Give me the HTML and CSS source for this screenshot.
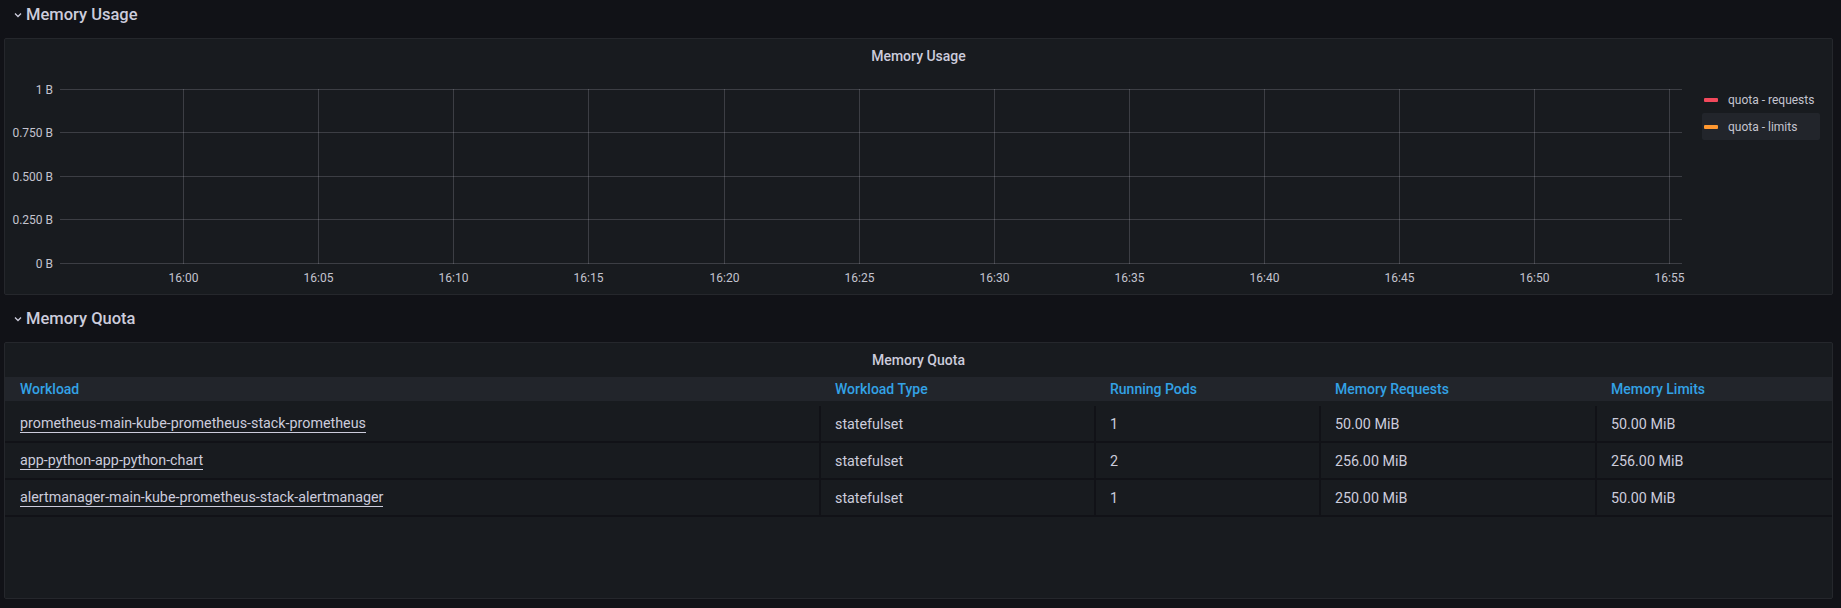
FILE: index.html
```html
<!DOCTYPE html>
<html lang="en">
<head>
<meta charset="utf-8">
<title>Memory</title>
<link rel="stylesheet" href="styles.css">
</head>
<body>
<section class="row">
  <header class="row-head">
    <svg class="chev" width="8" height="6" viewBox="0 0 8 6"><polyline points="1,1.5 4,4.5 7,1.5" fill="none" stroke="#ccccdc" stroke-width="1.3"/></svg>
    <span class="row-title">Memory Usage</span>
  </header>
  <div class="panel">
    <div class="panel-title">Memory Usage</div>
    <div class="chart-body">
      <svg class="chart" width="1695" height="222" viewBox="0 0 1695 222">
        <g class="grid" stroke="rgba(204,204,220,0.2)" stroke-width="1">
          <line x1="55" y1="16.5" x2="1677" y2="16.5"/>
          <line x1="55" y1="59.5" x2="1677" y2="59.5"/>
          <line x1="55" y1="103.5" x2="1677" y2="103.5"/>
          <line x1="55" y1="146.5" x2="1677" y2="146.5"/>
          <line x1="55" y1="190.5" x2="1677" y2="190.5"/>
          <line x1="178.5" y1="16" x2="178.5" y2="191"/>
          <line x1="313.5" y1="16" x2="313.5" y2="191"/>
          <line x1="448.5" y1="16" x2="448.5" y2="191"/>
          <line x1="583.5" y1="16" x2="583.5" y2="191"/>
          <line x1="719.5" y1="16" x2="719.5" y2="191"/>
          <line x1="854.5" y1="16" x2="854.5" y2="191"/>
          <line x1="989.5" y1="16" x2="989.5" y2="191"/>
          <line x1="1124.5" y1="16" x2="1124.5" y2="191"/>
          <line x1="1259.5" y1="16" x2="1259.5" y2="191"/>
          <line x1="1394.5" y1="16" x2="1394.5" y2="191"/>
          <line x1="1529.5" y1="16" x2="1529.5" y2="191"/>
          <line x1="1664.5" y1="16" x2="1664.5" y2="191"/>
        </g>
        <g class="axis-y" text-anchor="end">
          <text x="48" y="20.5">1 B</text>
          <text x="48" y="63.5">0.750 B</text>
          <text x="48" y="107.5">0.500 B</text>
          <text x="48" y="150.5">0.250 B</text>
          <text x="48" y="194.5">0 B</text>
        </g>
        <g class="axis-x" text-anchor="middle">
          <text x="178.5" y="209">16:00</text>
          <text x="313.5" y="209">16:05</text>
          <text x="448.5" y="209">16:10</text>
          <text x="583.5" y="209">16:15</text>
          <text x="719.5" y="209">16:20</text>
          <text x="854.5" y="209">16:25</text>
          <text x="989.5" y="209">16:30</text>
          <text x="1124.5" y="209">16:35</text>
          <text x="1259.5" y="209">16:40</text>
          <text x="1394.5" y="209">16:45</text>
          <text x="1529.5" y="209">16:50</text>
          <text x="1664.5" y="209">16:55</text>
        </g>
      </svg>
      <ul class="legend">
        <li class="legend-item"><span class="swatch swatch-red"></span>quota - requests</li>
        <li class="legend-item legend-item-active"><span class="swatch swatch-orange"></span>quota - limits</li>
      </ul>
    </div>
  </div>
</section>

<section class="row row-second">
  <header class="row-head">
    <svg class="chev" width="8" height="6" viewBox="0 0 8 6"><polyline points="1,1.5 4,4.5 7,1.5" fill="none" stroke="#ccccdc" stroke-width="1.3"/></svg>
    <span class="row-title">Memory Quota</span>
  </header>
  <div class="panel">
    <div class="panel-title">Memory Quota</div>
    <div class="table">
      <div class="tr thead">
        <div class="th">Workload</div>
        <div class="th">Workload Type</div>
        <div class="th">Running Pods</div>
        <div class="th">Memory Requests</div>
        <div class="th">Memory Limits</div>
      </div>
      <div class="tbody">
        <div class="tr">
          <div class="td"><a class="link">prometheus-main-kube-prometheus-stack-prometheus</a></div>
          <div class="td">statefulset</div>
          <div class="td">1</div>
          <div class="td">50.00 MiB</div>
          <div class="td">50.00 MiB</div>
        </div>
        <div class="tr">
          <div class="td"><a class="link">app-python-app-python-chart</a></div>
          <div class="td">statefulset</div>
          <div class="td">2</div>
          <div class="td">256.00 MiB</div>
          <div class="td">256.00 MiB</div>
        </div>
        <div class="tr">
          <div class="td"><a class="link">alertmanager-main-kube-prometheus-stack-alertmanager</a></div>
          <div class="td">statefulset</div>
          <div class="td">1</div>
          <div class="td">250.00 MiB</div>
          <div class="td">50.00 MiB</div>
        </div>
      </div>
    </div>
  </div>
</section>
</body>
</html>
```

FILE: styles.css
```css
* { box-sizing: border-box; }

html, body {
  margin: 0;
  padding: 0;
  background: #111217;
  color: #ccccdc;
  font-family: Roboto, "Liberation Sans", sans-serif;
}

body {
  padding: 0 8px 0 4px;
}

.row-second {
  margin-top: 9px;
}

.row-head {
  height: 28px;
  display: flex;
  align-items: center;
  padding-left: 10px;
  margin-bottom: 10px;
}

.chev {
  display: block;
  margin-right: 4px;
  margin-top: 1px;
}

.row-title {
  font-size: 16.5px;
  font-weight: 500;
  color: #ccccdc;
}

.panel {
  height: 257px;
  background: #181b1f;
  border: 1px solid #25272c;
  border-radius: 2px;
  overflow: hidden;
}

.panel-title {
  height: 34px;
  display: flex;
  align-items: center;
  justify-content: center;
  font-size: 14px;
  font-weight: 500;
  color: #ccccdc;
}

.chart-body {
  display: flex;
}

.chart {
  display: block;
  flex: none;
}

.chart text {
  font-family: Roboto, "Liberation Sans", sans-serif;
  font-size: 12px;
  fill: #c4c4cf;
}

.legend {
  list-style: none;
  margin: 13px 0 0 0;
  padding: 0 0 0 2px;
}

.legend-item {
  width: 118px;
  height: 27px;
  display: flex;
  align-items: center;
  padding-left: 2px;
  font-size: 12px;
  color: #c4c4cf;
  border-radius: 2px;
}

.legend-item-active {
  background: #22252b;
}

.swatch {
  width: 14px;
  height: 4px;
  border-radius: 1px;
  margin-right: 10px;
}

.swatch-red { background: #f2495c; }
.swatch-orange { background: #ff9830; }

.table {
  font-size: 14px;
}

.tr {
  display: grid;
  grid-template-columns: 814px 275px 225px 276px 1fr;
}

.thead {
  height: 24px;
  background: #22252b;
  margin-bottom: 5px;
}

.th {
  display: flex;
  align-items: center;
  padding-left: 16px;
  font-weight: 500;
  color: #33a2e5;
}

.th:first-child {
  padding-left: 15px;
}

.tbody .tr {
  height: 37px;
  border-bottom: 2px solid #111217;
}

.td {
  display: flex;
  align-items: center;
  padding-left: 14px;
  border-left: 2px solid #111217;
  color: #ccccdc;
  font-size: 14.3px;
}

.td:first-child {
  border-left: none;
  padding-left: 15px;
}

.link {
  color: #ccccdc;
  text-decoration: none;
  border-bottom: 1px solid #ccccdc;
  line-height: 17px;
}
```
